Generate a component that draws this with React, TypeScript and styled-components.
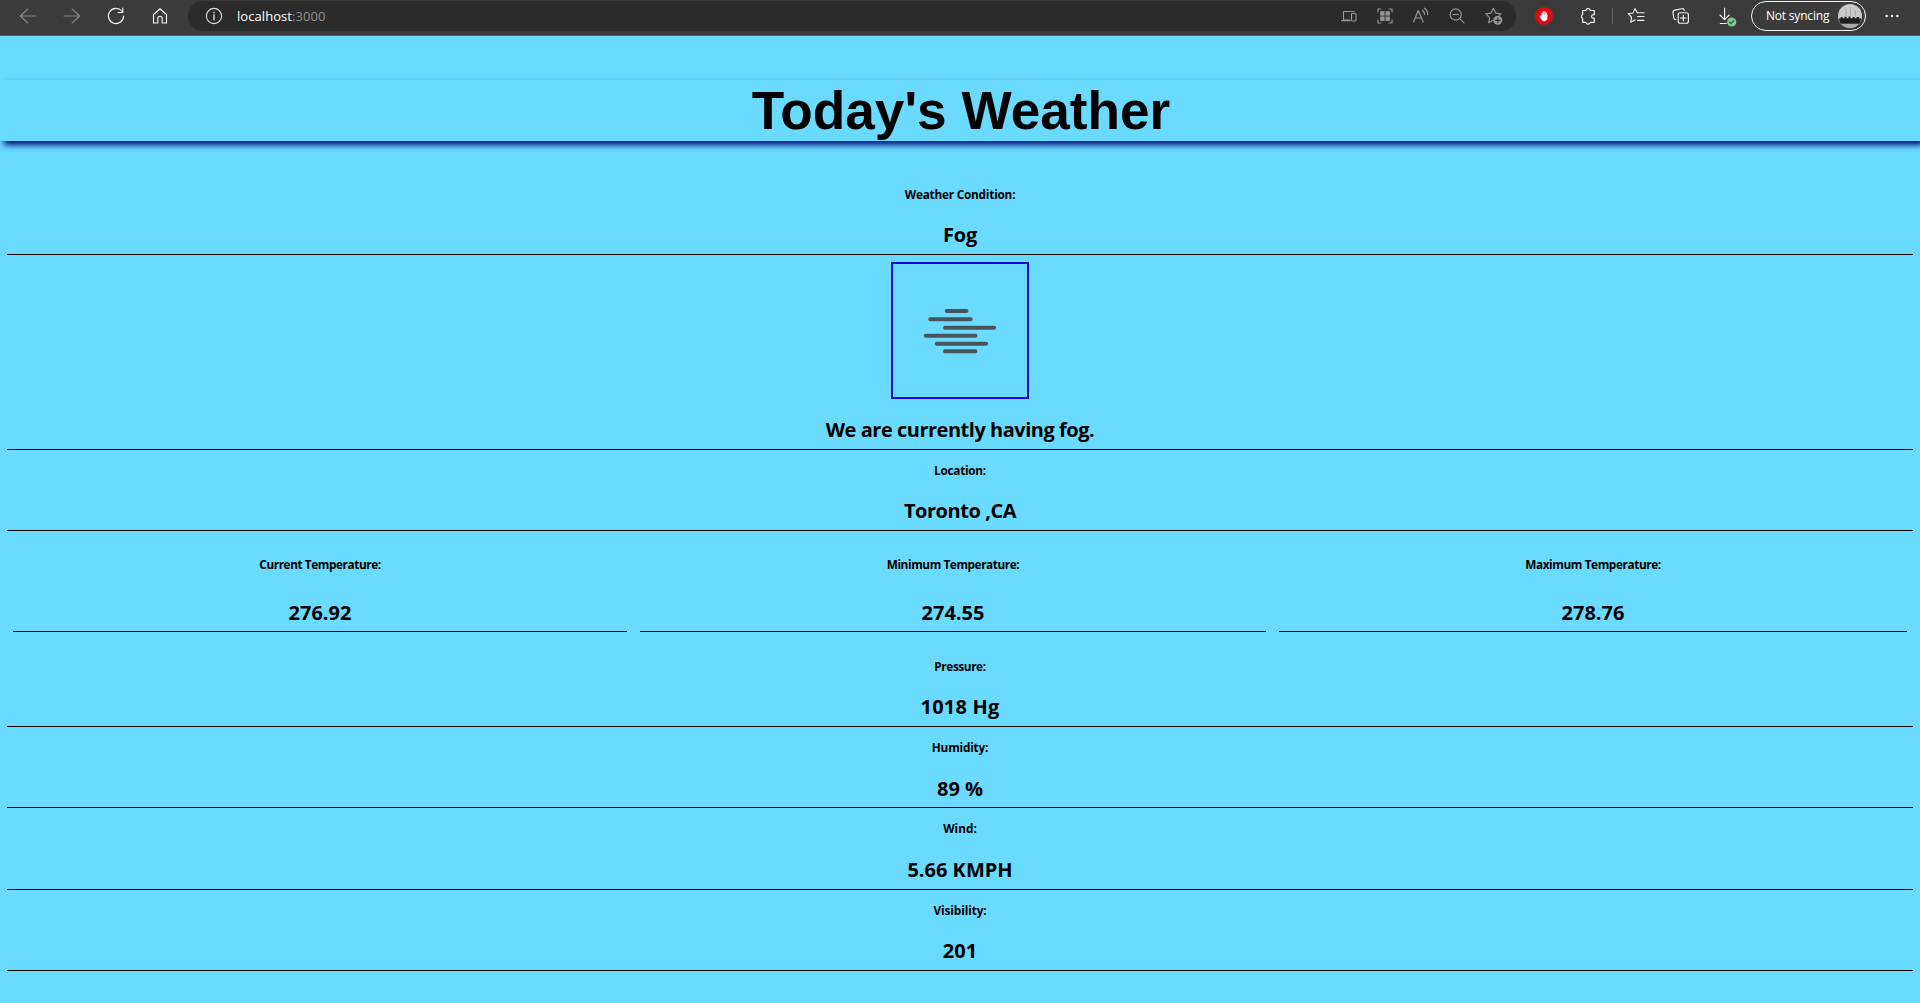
import React from "react";
import styled, { createGlobalStyle } from "styled-components";

const GlobalStyle = createGlobalStyle`
  *, *::before, *::after { box-sizing: border-box; }
  html, body { margin: 0; background: #6bdaff; }
  body {
    font-family: "Segoe UI", "Open Sans", "Noto Sans", sans-serif;
    color: #000;
    overflow: hidden;
  }
`;

const Page = styled.div`
  height: 1003px;
  background: #6bdaff;
`;

const BrowserBar = styled.div`
  display: flex;
  align-items: center;
  height: 36px;
  padding: 0 0 3px 16px;
  background: #3b3b3b;
  border-bottom: 1px solid #59625f;
`;

const Icon = styled.svg<{ $gap?: number; $tone?: string }>`
  display: block;
  flex: none;
  width: 24px;
  height: 24px;
  margin-left: ${(p) => p.$gap ?? 0}px;
  fill: none;
  color: ${(p) => p.$tone ?? "#f2f2f2"};
  stroke: currentColor;
  stroke-width: 1.15;
  stroke-linecap: round;
  stroke-linejoin: round;
`;

const AddressBar = styled.div`
  display: flex;
  align-items: center;
  width: 1328px;
  height: 30px;
  margin-left: 16px;
  padding: 0 10px 0 14px;
  border-radius: 15px;
  background: #2b2b2b;
`;

const Url = styled.span`
  flex: 1;
  margin-left: 11px;
  font-size: 13px;
  line-height: 18px;
  letter-spacing: 0.06px;
  color: #fff;
`;

const Port = styled.span`
  color: #8f8f8f;
`;

const Divider = styled.span`
  width: 1px;
  height: 16px;
  margin-left: 12px;
  background: #666;
`;

const ProfileButton = styled.div`
  display: flex;
  align-items: center;
  justify-content: space-between;
  width: 115px;
  height: 30px;
  margin-left: 11px;
  padding: 0 3px 0 14px;
  border: 1px solid #f4f4f4;
  border-radius: 15px;
  font-size: 12px;
  letter-spacing: -0.2px;
  line-height: 18px;
  color: #fff;
`;

const Avatar = styled.svg`
  display: block;
  width: 24px;
  height: 24px;
`;

const Title = styled.h1`
  height: 61px;
  margin: 44px 0 33px;
  padding-left: 2px;
  font-family: Arial, "Liberation Sans", sans-serif;
  font-size: 53.2px;
  line-height: 61px;
  font-weight: 700;
  text-align: center;
  box-shadow: 4px 4px 6px #00107d;
`;

const Report = styled.main`
  display: flex;
  flex-direction: column;
  padding: 0 7px;
`;

const Section = styled.section<{ $height?: number; $top?: number; $bottom?: number }>`
  display: flex;
  flex-direction: column;
  align-items: center;
  justify-content: space-between;
  height: ${(p) => p.$height ?? 81}px;
  padding: ${(p) => p.$top ?? 13}px 0 ${(p) => p.$bottom ?? 5}px;
  border-bottom: 1px solid #000;
`;

const Temperatures = styled.div`
  display: grid;
  grid-template-columns: 614px 626px 628px;
  column-gap: 13px;
  padding: 0 6px;
  margin-bottom: 14px;
`;

const Label = styled.h5<{ $track?: number }>`
  margin: 0;
  font-size: 11.8px;
  line-height: 14px;
  font-weight: 700;
  letter-spacing: ${(p) => p.$track ?? -0.2}px;
`;

const Value = styled.h3<{ $track?: number }>`
  margin: 0;
  font-size: 20px;
  line-height: 28px;
  font-weight: 700;
  letter-spacing: ${(p) => p.$track ?? 0}px;
`;

const ConditionFrame = styled.div`
  width: 138px;
  height: 137px;
  border: 2px solid #0808d8;
`;

const FogDrawing = styled.svg`
  display: block;
  width: 134px;
  height: 133px;
  fill: none;
  stroke: #48535a;
  stroke-width: 3.9;
  stroke-linecap: round;
`;

const DIM = "#969696";

const Toolbar = () => (
  <BrowserBar>
    <Icon $tone="#858585"><path d="M20 12H4.3M11.8 5 4.3 12l7.500 7" /></Icon>
    <Icon $gap={20} $tone="#858585"><path d="M4 12h15.700M12.200 5l7.500 7-7.500 7" /></Icon>
    <Icon $gap={20} strokeWidth="1.3"><path d="M17.800 7A7.600 7.600 0 1 0 19.600 12M18.800 4v4.500h-4.600" /></Icon>
    <Icon $gap={20}><path d="M5.500 10.500 12 4.700l6.500 5.800V19h-4.300v-4.600a2.200 2.200 0 0 0-4.400 0V19H5.500Z" /></Icon>
    <AddressBar>
      <Icon $tone="#dedede">
        <circle cx="12" cy="12" r="7.600" />
        <path d="M12 11v4.700M12 8.300v.4" strokeWidth="1.400" />
      </Icon>
      <Url>localhost<Port>:3000</Port></Url>
      <Icon $tone={DIM}>
        <path d="M17.500 7.500H6.500v8.500H13M4.500 16.600H13" />
        <rect x="14.500" y="9.500" width="4.500" height="7.500" rx="0.800" />
      </Icon>
      <Icon $gap={12} $tone={DIM}>
        <path d="M5 8V5h3M16 5h3v3M19 16v3h-3M8 19H5v-3" />
        <g fill="currentColor" stroke="none">
          <rect x="7.200" y="7.200" width="4.400" height="4.400" />
          <rect x="12.500" y="7.200" width="4.400" height="4.400" />
          <rect x="7.200" y="12.500" width="4.400" height="4.400" />
          <rect x="12.500" y="12.500" width="4.400" height="4.400" />
        </g>
      </Icon>
      <Icon $gap={12} $tone={DIM}>
        <path d="M4.500 18 9.300 6.500 14.200 18M6.300 14h6.100M13.500 6.200a5.500 5.500 0 0 1 2 4.200M15.500 4.200a7.500 7.500 0 0 1 3.200 6.400" />
      </Icon>
      <Icon $gap={12} $tone={DIM}>
        <circle cx="10.700" cy="10.500" r="5.600" />
        <path d="m14.800 14.700 4.200 4.200M8 10.500h5.400" />
      </Icon>
      <Icon $gap={13} $tone={DIM}>
        <path d="M10.500 16.600 6.700 18.800l.9-5.200-3.800-3.700 5.200-.8L11.400 4.300l2.400 4.800 5.200.8-1.500 1.400" />
        <circle cx="15.800" cy="16.300" r="4.500" fill="currentColor" stroke="none" />
        <path d="M15.800 14v4.600M13.500 16.300h4.600" stroke="#2b2b2b" />
      </Icon>
    </AddressBar>
    <Icon $gap={16}>
      <path d="M8.600 4h6.800L20 8.600v6.800L15.400 20H8.600L4 15.400V8.600Z" fill="#e00b12" stroke="#e00b12" />
      <path d="M10 13V9M11.500 12V7.500M13 12V7.500M14.500 13V9" stroke="#fff" strokeWidth="1.200" />
      <path d="M9.400 11.500h5.700v2.600a2.900 2.900 0 0 1-5 2l-2-3.300Z" fill="#fff" stroke="#fff" strokeWidth="0.600" />
    </Icon>
    <Icon $gap={20} strokeWidth="1.300">
      <path d="M6.700 6.500h3.100a2.300 2.300 0 0 1 4.500 0h4v4.200h-1.500a1.800 1.800 0 0 0 0 3.400h1.500v4.200h-4a2.300 2.300 0 0 1-4.500 0H6.700v-3.900a2.200 2.200 0 0 1 0-4Z" />
    </Icon>
    <Divider />
    <Icon $gap={12}>
      <path d="M12.300 8.700 10 4.700 7.800 9l-4.600.7 3.300 3.400-.7 5.200L10 15.900M12.300 8.700H19M12.500 12.500H19M12.500 16.300H19" />
    </Icon>
    <Icon $gap={20}>
      <rect x="9.200" y="8.700" width="10.200" height="10.500" rx="2" />
      <path d="M14.300 11.200v5.600M11.500 14h5.600M6.800 15.700a2.200 2.200 0 0 1-2-1.700L4 8.600a2.300 2.300 0 0 1 1.800-2.500l6.900-1.400a2.200 2.200 0 0 1 2.600 1.600" />
    </Icon>
    <Icon $gap={23}>
      <path d="M8.600 4v11.500M3.900 11l4.700 4.700 4.600-4.700M4.300 19.500h6" />
      <circle cx="15.700" cy="18" r="4.600" fill="#82c796" stroke="none" />
      <path d="m13.600 18.100 1.500 1.500 2.800-3" stroke="#235b35" />
    </Icon>
    <ProfileButton>
      Not syncing
      <Avatar viewBox="0 0 24 24">
        <circle cx="12" cy="12" r="12" fill="#c9c9c9" />
        <path d="M.9 14.500h1.600V13h2v1.300h1.800V12.800h2.300v1.400h2v-1.700h1.800v1.700h2.200V13h2v1.200h2V13h2.500v1.500h2c-.2 2-.9 3.800-1.800 5.200H2.700a12 12 0 0 1-1.800-5.200Z" fill="#1e1e1e" />
        <path d="M8 5v8M12.500 3.500v9M17.500 6v7" stroke="#a2a2a2" strokeWidth="0.800" />
        <path d="M3.500 20h17A12 12 0 0 1 3.500 20Z" fill="#a8a8a8" />
      </Avatar>
    </ProfileButton>
    <Icon $gap={14}>
      <g fill="currentColor" stroke="none">
        <circle cx="6.600" cy="12" r="1.200" />
        <circle cx="12" cy="12" r="1.200" />
        <circle cx="17.400" cy="12" r="1.200" />
      </g>
    </Icon>
  </BrowserBar>
);

const FogIcon = () => (
  <FogDrawing viewBox="0 0 134 133">
    <path d="M53.700 47H73.500M37.200 55.300H77.700M52 63.700H101.200M32.700 71.700H82.400M43.800 79.700H93.200M52 87.300H82.400" />
  </FogDrawing>
);

export default function App() {
  return (
    <Page>
      <GlobalStyle />
      <Toolbar />
      <Title>Today's Weather</Title>
      <Report>
        <Section>
          <Label $track={-0.22}>Weather Condition:</Label>
          <Value $track={-0.2}>Fog</Value>
        </Section>
        <Section $height={195} $top={7}>
          <ConditionFrame>
            <FogIcon />
          </ConditionFrame>
          <Value $track={-0.48}>We are currently having fog.</Value>
        </Section>
        <Section>
          <Label $track={-0.28}>Location:</Label>
          <Value $track={-0.45}>Toronto ,CA</Value>
        </Section>
        <Temperatures>
          <Section $height={101} $top={26} $bottom={4}>
            <Label $track={-0.42}>Current Temperature:</Label>
            <Value>276.92</Value>
          </Section>
          <Section $height={101} $top={26} $bottom={4}>
            <Label $track={-0.42}>Minimum Temperature:</Label>
            <Value>274.55</Value>
          </Section>
          <Section $height={101} $top={26} $bottom={4}>
            <Label $track={-0.4}>Maximum Temperature:</Label>
            <Value>278.76</Value>
          </Section>
        </Temperatures>
        <Section>
          <Label $track={-0.4}>Pressure:</Label>
          <Value $track={0.2}>1018 Hg</Value>
        </Section>
        <Section $bottom={4}>
          <Label $track={-0.2}>Humidity:</Label>
          <Value>89 %</Value>
        </Section>
        <Section $height={82}>
          <Label $track={0}>Wind:</Label>
          <Value>5.66 KMPH</Value>
        </Section>
        <Section>
          <Label $track={-0.1}>Visibility:</Label>
          <Value>201</Value>
        </Section>
      </Report>
    </Page>
  );
}
